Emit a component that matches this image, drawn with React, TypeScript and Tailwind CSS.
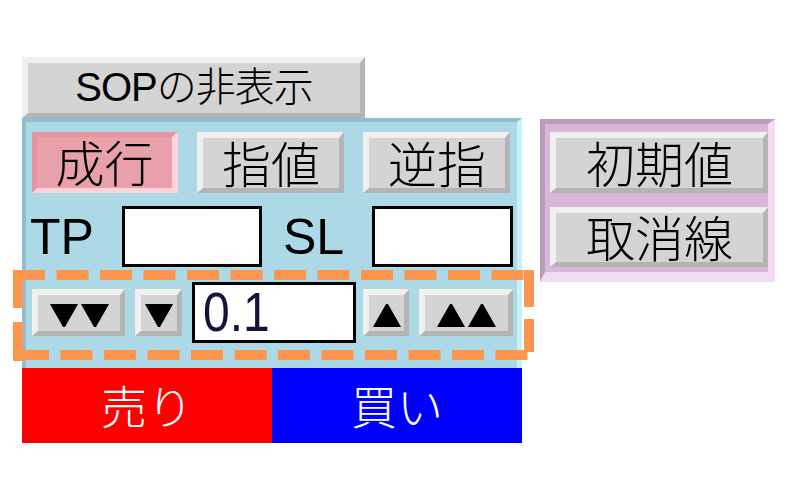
import React from 'react';

const cjk = { fontFamily: '"Noto Sans CJK JP", "Liberation Sans", sans-serif' };
const latin = { fontFamily: '"Liberation Sans", "Noto Sans CJK JP", sans-serif' };

const raised =
  'flex items-center justify-center bg-[#d4d4d4] border-t-[6px] border-l-[6px] border-b-[5px] border-r-[5px] border-t-[#f0f0f0] border-l-[#f0f0f0] border-b-[#b4b4b4] border-r-[#b4b4b4] text-black';

const Down = () => (
  <svg width="28" height="23" viewBox="0 0 28 23">
    <polygon points="0,0 28,0 15,23 13,23" fill="#000" />
  </svg>
);

const Up = () => (
  <svg width="28" height="23" viewBox="0 0 28 23">
    <polygon points="13,0 15,0 28,23 0,23" fill="#000" />
  </svg>
);

const GrayButton = ({ label, className }: { label: string; className: string }) => (
  <div className={`${raised} ${className} text-[49px] leading-none font-light`} style={cjk}>
    <span className="-mt-[4px]">{label}</span>
  </div>
);

// annotation frame drawn over the step row
const DashedFrame = () => (
  <svg className="absolute left-[13px] top-[270px]" width="522" height="91" viewBox="0 0 522 91">
    <g stroke="#fd954f" strokeWidth="10" fill="none">
      <line x1="0" y1="5" x2="522" y2="5" strokeDasharray="32 11.5" />
      <line x1="5" y1="0" x2="5" y2="91" strokeDasharray="38 14 39" />
      <line x1="516" y1="0" x2="516" y2="91" strokeDasharray="37 12 33" />
      <line x1="4" y1="85" x2="522" y2="85" strokeDasharray="32 11.5" />
    </g>
  </svg>
);

export default function App() {
  return (
    <div className="relative w-[800px] h-[500px] bg-white overflow-hidden">
      <div className="flex items-start pt-[57px] pl-[22px]">
        <div className="flex flex-col w-[500px]">
          <div className={`${raised} w-[343px] h-[61px] text-[40px] leading-none font-light`} style={latin}>
            <span className="-mt-[3px] tracking-[-1px]">SOPの非表示</span>
          </div>

          <div className="h-[250px] bg-[#add8e6] border-t-[4px] border-l-[4px] border-r-[5px] border-t-[#8fbfcf] border-l-[#8fbfcf] border-r-[#c8f2fa] flex flex-col">
            <div className="flex gap-[19px] pl-[6px] mt-[10px]">
              <div
                className="flex items-center justify-center w-[146px] h-[61px] bg-[#e8a0aa] border-t-[5px] border-l-[5px] border-b-[5px] border-r-[6px] border-t-[#e394a0] border-l-[#e394a0] border-b-[#ffd2de] border-r-[#ffd2de] text-[49px] leading-none font-light text-black"
                style={cjk}
              >
                <span className="-mt-[4px]">成行</span>
              </div>
              <GrayButton label="指値" className="w-[147px] h-[61px]" />
              <GrayButton label="逆指" className="w-[147px] h-[61px]" />
            </div>

            <div className="flex items-center pl-[4px] mt-[13px]">
              <span className="w-[92px] text-[50px] leading-none text-black" style={latin}>TP</span>
              <div className="w-[140px] h-[61px] bg-white border-[3px] border-black" />
              <span className="w-[89px] ml-[21px] text-[50px] leading-none text-black" style={latin}>SL</span>
              <div className="w-[141px] h-[61px] bg-white border-[3px] border-black" />
            </div>

            <div className="flex items-center pl-[6px] mt-[15px]">
              <div className={`${raised} w-[93px] h-[47px] gap-[3px] pt-[4px]`}>
                <Down />
                <Down />
              </div>
              <div className={`${raised} w-[47px] h-[47px] ml-[10px] pt-[4px]`}>
                <Down />
              </div>
              <div className="w-[164px] h-[61px] ml-[10px] bg-white border-[3px] border-black flex items-center pl-[8px]">
                <span className="text-[48px] leading-none text-[#14143a] scale-y-[1.15] origin-center" style={latin}>0.1</span>
              </div>
              <div className={`${raised} w-[46px] h-[47px] ml-[7px] pt-[4px]`}>
                <Up />
              </div>
              <div className={`${raised} w-[94px] h-[47px] ml-[10px] gap-[3px] pt-[4px]`}>
                <Up />
                <Up />
              </div>
            </div>
          </div>

          <div className="flex h-[75px] text-white text-[46px] leading-none font-light" style={cjk}>
            <div className="w-[250px] bg-[#ff0000] flex items-center justify-center">
              <span className="-mt-[4px]">売り</span>
            </div>
            <div className="w-[250px] bg-[#0000ff] flex items-center justify-center">
              <span className="-mt-[4px]">買い</span>
            </div>
          </div>
        </div>

        <div className="ml-[18px] mt-[62px] w-[235px] h-[163px] bg-[#d8b8d8] border-t-[5px] border-l-[5px] border-r-[7px] border-b-[10px] border-t-[#bc9cbc] border-l-[#bc9cbc] border-r-[#f2dcf2] border-b-[#f2dcf2] flex flex-col gap-[14px] pl-[5px] pt-[8px]">
          <GrayButton label="初期値" className="w-[218px] h-[61px]" />
          <GrayButton label="取消線" className="w-[218px] h-[60px]" />
        </div>
      </div>

      <DashedFrame />
    </div>
  );
}
